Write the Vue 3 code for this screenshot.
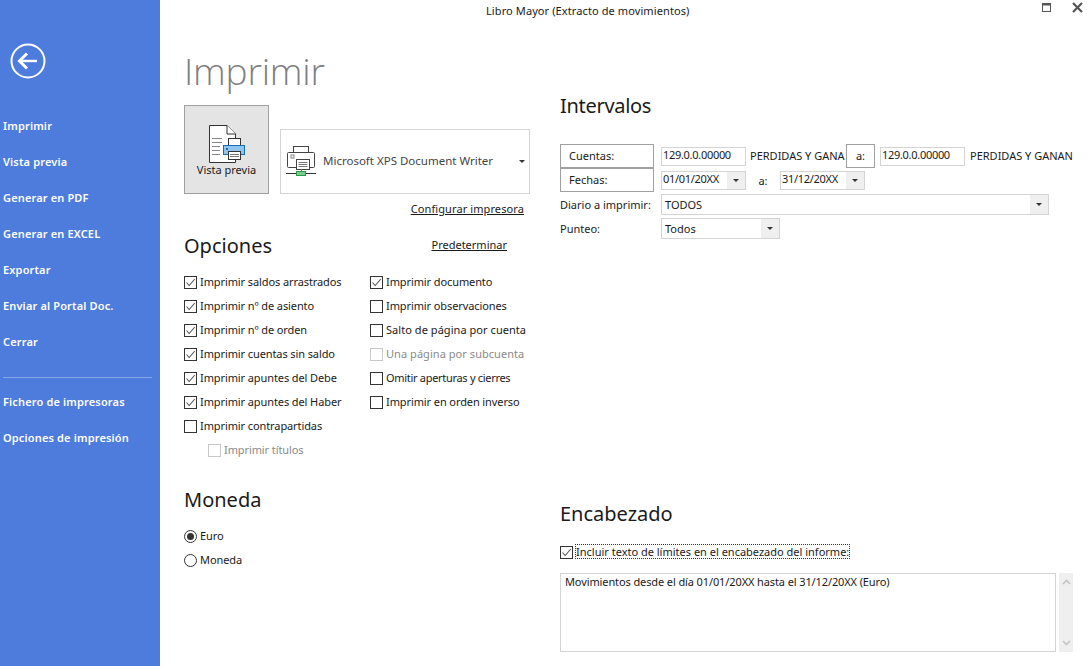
<script setup>
const navTop = ['Imprimir', 'Vista previa', 'Generar en PDF', 'Generar en EXCEL', 'Exportar', 'Enviar al Portal Doc.', 'Cerrar']
const navBottom = ['Fichero de impresoras', 'Opciones de impresión']

const optionsLeft = [
  { label: 'Imprimir saldos arrastrados', on: true },
  { label: 'Imprimir nº de asiento', on: true },
  { label: 'Imprimir nº de orden', on: true },
  { label: 'Imprimir cuentas sin saldo', on: true },
  { label: 'Imprimir apuntes del Debe', on: true },
  { label: 'Imprimir apuntes del Haber', on: true },
  { label: 'Imprimir contrapartidas', on: false },
  { label: 'Imprimir títulos', on: false, off: true, sub: true }
]
const optionsRight = [
  { label: 'Imprimir documento', on: true },
  { label: 'Imprimir observaciones', on: false },
  { label: 'Salto de página por cuenta', on: false, loose: true },
  { label: 'Una página por subcuenta', on: false, off: true, loose: true },
  { label: 'Omitir aperturas y cierres', on: false, tight: true },
  { label: 'Imprimir en orden inverso', on: false }
]
</script>

<template>
  <div class="app">
    <aside class="side">
      <svg class="back" width="36" height="36" viewBox="0 0 36 36">
        <circle cx="18" cy="18" r="16.5" fill="none" stroke="#fff" stroke-width="2" />
        <path d="M9 18H27" stroke="#fff" stroke-width="2.4" fill="none" />
        <path d="M17 10.5L9.5 18L17 25.5" stroke="#fff" stroke-width="3" fill="none" />
      </svg>
      <a v-for="item in navTop" :key="item" class="navItem">{{ item }}</a>
      <div class="navLine"></div>
      <a v-for="item in navBottom" :key="item" class="navItem">{{ item }}</a>
    </aside>

    <main class="main">
      <header class="titleBar">Libro Mayor (Extracto de movimientos)</header>
      <div class="winBtns">
        <svg width="11" height="11" viewBox="0 0 11 11">
          <rect x="1.5" y="1.5" width="8" height="8" fill="none" stroke="#555" stroke-width="1" />
          <rect x="1" y="1" width="9" height="2.5" fill="#555" />
        </svg>
        <svg width="13" height="13" viewBox="0 0 13 13">
          <path d="M2 2L11 11M11 2L2 11" stroke="#555" stroke-width="2.2" fill="none" />
        </svg>
      </div>

      <div class="columns">
        <section class="left">
          <h1 class="pageTitle">Imprimir</h1>

          <div class="printRow">
            <button class="previewBtn">
              <svg width="40" height="40" viewBox="0 0 40 40">
                <path d="M2.5 1.5H20L28.5 10V38.5H2.5Z" fill="#fff" stroke="#333" stroke-width="1" />
                <path d="M20 1.5V10H28.5" fill="#fff" stroke="#333" stroke-width="1" />
                <path d="M5 14.5H15M5 18.5H15M5 22.5H13M5 26.5H13M5 30.5H13" stroke="#888" stroke-width="1" />
                <rect x="21.5" y="14.5" width="12" height="8" fill="#fff" stroke="#333" />
                <rect x="16.5" y="21.5" width="21" height="9" fill="#8fc4f0" stroke="#1a6bb0" />
                <rect x="19" y="24" width="2" height="2" fill="#1a6bb0" />
                <rect x="21.5" y="27.5" width="12" height="8" fill="#fff" stroke="#333" />
                <path d="M23 30.5H32M23 32.5H32" stroke="#777" stroke-width="1" />
              </svg>
              <span class="previewLabel">Vista previa</span>
            </button>

            <div class="printerBox">
              <svg width="32" height="34" viewBox="0 0 32 34">
                <rect x="8.5" y="1.5" width="15" height="6" fill="#fff" stroke="#444" />
                <rect x="2.5" y="7.5" width="27" height="15" rx="1" fill="#fff" stroke="#444" />
                <rect x="6" y="10" width="3" height="3" fill="#fff" stroke="#888" stroke-width="1" />
                <rect x="11.5" y="14.5" width="13" height="10" fill="#fff" stroke="#444" />
                <path d="M13.5 17.5H22.5M13.5 19.5H22.5M13.5 21.5H22.5" stroke="#777" stroke-width="1" />
                <path d="M16.5 24.5V27" stroke="#777" stroke-width="1" />
                <path d="M1 28.5H31" stroke="#333" stroke-width="1" />
                <rect x="11.5" y="26.5" width="9" height="4" fill="#7ecb8f" stroke="#2a9a4a" />
              </svg>
              <span class="printerName">Microsoft XPS Document Writer</span>
              <i class="caret"></i>
            </div>
          </div>

          <div class="configRow"><a class="link">Configurar impresora</a></div>

          <div class="optionsHead">
            <h2 class="heading">Opciones</h2>
            <a class="link defaultLink">Predeterminar</a>
          </div>

          <div class="optionCols">
            <div class="optionCol firstCol">
              <label v-for="o in optionsLeft" :key="o.label" class="check" :class="{ disabled: o.off, sub: o.sub }">
                <span class="box">
                  <svg v-if="o.on" width="11" height="11" viewBox="0 0 11 11">
                    <path d="M1.5 5.5L4.2 8.5L9.8 2" stroke="#555" stroke-width="1.1" fill="none" />
                  </svg>
                </span>
                {{ o.label }}
              </label>
            </div>
            <div class="optionCol">
              <label v-for="o in optionsRight" :key="o.label" class="check" :class="{ disabled: o.off, loose: o.loose, tight: o.tight }">
                <span class="box">
                  <svg v-if="o.on" width="11" height="11" viewBox="0 0 11 11">
                    <path d="M1.5 5.5L4.2 8.5L9.8 2" stroke="#555" stroke-width="1.1" fill="none" />
                  </svg>
                </span>
                {{ o.label }}
              </label>
            </div>
          </div>

          <h2 class="heading monedaHead">Moneda</h2>
          <label class="check"><span class="radio on"></span>Euro</label>
          <label class="check"><span class="radio"></span>Moneda</label>
        </section>

        <section class="right">
          <h2 class="heading intervalHead">Intervalos</h2>

          <div class="row rowTall">
            <button class="fieldBtn">Cuentas:</button>
            <span class="input">129.0.0.00000</span>
            <span class="rangeName shortName">PERDIDAS Y GANA</span>
            <button class="fieldBtn toBtn">a:</button>
            <span class="input">129.0.0.00000</span>
            <span class="rangeName lastName">PERDIDAS Y GANANCIAS</span>
          </div>
          <div class="row rowTall">
            <button class="fieldBtn">Fechas:</button>
            <span class="input">01/01/20XX<i class="drop"><i class="caret"></i></i></span>
            <span class="toLabel">a:</span>
            <span class="input">31/12/20XX<i class="drop"><i class="caret"></i></i></span>
          </div>
          <div class="row rowSelect rowDiario">
            <span class="rowLabel">Diario a imprimir:</span>
            <span class="input select wide">TODOS<i class="drop"><i class="caret"></i></i></span>
          </div>
          <div class="row rowSelect rowPunteo">
            <span class="rowLabel">Punteo:</span>
            <span class="input select narrow">Todos<i class="drop"><i class="caret"></i></i></span>
          </div>

          <h2 class="heading encabezadoHead">Encabezado</h2>
          <label class="check focusCheck">
            <span class="box">
              <svg width="11" height="11" viewBox="0 0 11 11">
                <path d="M1.5 5.5L4.2 8.5L9.8 2" stroke="#555" stroke-width="1.1" fill="none" />
              </svg>
            </span>
            <span class="focusText">Incluir texto de límites en el encabezado del informe:</span>
          </label>

          <div class="textRow">
            <div class="textArea">Movimientos desde el día 01/01/20XX hasta el 31/12/20XX (Euro)</div>
            <div class="scrollBar">
              <svg width="9" height="6" viewBox="0 0 9 6"><path d="M1 5L4.5 1.5L8 5" stroke="#c4c4c4" stroke-width="1.6" fill="none" /></svg>
              <svg width="9" height="6" viewBox="0 0 9 6"><path d="M1 1L4.5 4.5L8 1" stroke="#c4c4c4" stroke-width="1.6" fill="none" /></svg>
            </div>
          </div>
        </section>
      </div>
    </main>
  </div>
</template>

<style>
html, body {
  margin: 0;
  background: #fff;
}
</style>

<style scoped>
.app {
  display: flex;
  width: 1087px;
  height: 666px;
  overflow: hidden;
  background: #fff;
  color: #1a1a1a;
  font-family: "Noto Sans", "Open Sans", sans-serif;
  font-size: 11px;
}

.side {
  width: 160px;
  flex-shrink: 0;
  box-sizing: border-box;
  padding-top: 43px;
  background: #4e7cdc;
  color: #fff;
  display: flex;
  flex-direction: column;
}

.back {
  margin: 0 0 29px 10px;
}

.navItem {
  height: 36px;
  line-height: 36px;
  padding-left: 3px;
  font-weight: 600;
  letter-spacing: 0.15px;
  white-space: nowrap;
}

.navLine {
  height: 1px;
  margin: 17px 8px 6px 3px;
  background: #86a6e8;
}

.main {
  position: relative;
  flex: 1;
  min-width: 0;
}

.titleBar {
  height: 22px;
  line-height: 22px;
  padding-left: 326px;
  letter-spacing: 0.1px;
  white-space: nowrap;
}

.winBtns {
  position: absolute;
  top: 1px;
  right: 3px;
  display: flex;
  align-items: center;
  gap: 19px;
}

.columns {
  display: flex;
  padding-left: 24px;
}

.left {
  width: 346px;
  flex-shrink: 0;
  display: flex;
  flex-direction: column;
}

.right {
  width: 513px;
  margin-left: 30px;
  overflow: hidden;
}

.pageTitle {
  height: 45px;
  margin: 26px 0 12px;
  color: #7f7f7f;
  font-family: "Open Sans", "Noto Sans", sans-serif;
  font-size: 37px;
  font-weight: 300;
  letter-spacing: -0.2px;
  line-height: 45px;
}

.printRow {
  display: flex;
  align-items: flex-end;
  gap: 11px;
}

.previewBtn {
  width: 85px;
  height: 89px;
  box-sizing: border-box;
  padding: 18px 0 0;
  border: 1px solid #a0a0a0;
  background: #e4e4e4;
  color: inherit;
  font: inherit;
  display: flex;
  flex-direction: column;
  align-items: center;
}

.previewLabel {
  margin-top: -2px;
}

.printerBox {
  width: 250px;
  height: 65px;
  box-sizing: border-box;
  padding: 0 3px 0 4px;
  border: 1px solid #d4d4d4;
  display: flex;
  align-items: center;
  gap: 6px;
}

.printerName {
  flex: 1;
  padding-bottom: 2px;
  color: #444;
  font-size: 11.5px;
}

.caret {
  display: block;
  width: 0;
  height: 0;
  border-left: 3px solid transparent;
  border-right: 3px solid transparent;
  border-top: 3px solid #333;
}

.printerBox .caret {
  margin-right: 1px;
}

.configRow {
  margin-top: 7px;
  padding-right: 6px;
  text-align: right;
  letter-spacing: 0.1px;
  line-height: 16px;
}

.link {
  text-decoration: underline;
}

.heading {
  margin: 0;
  font-size: 20px;
  font-weight: 400;
  line-height: 30px;
}

.optionsHead {
  margin-top: 14px;
  padding-right: 23px;
  display: flex;
  align-items: center;
  justify-content: space-between;
}

.defaultLink {
  margin-bottom: 3px;
}

.optionCols {
  display: flex;
  margin-top: 9px;
}

.optionCol {
  display: flex;
  flex-direction: column;
}

.firstCol {
  width: 186px;
}

.check {
  height: 24px;
  box-sizing: border-box;
  padding-bottom: 2px;
  display: flex;
  align-items: center;
  gap: 3px;
  letter-spacing: -0.1px;
  white-space: nowrap;
}

.check.loose {
  letter-spacing: 0.05px;
}

.check.tight {
  letter-spacing: -0.3px;
}

.check.sub {
  padding-left: 24px;
}

.check.disabled {
  color: #8a8a8a;
}

.box,
.radio {
  width: 13px;
  height: 13px;
  box-sizing: border-box;
  margin-top: 2px;
  border: 1px solid #333;
  background: #fff;
  flex-shrink: 0;
}

.box {
  display: flex;
  align-items: center;
  justify-content: center;
}

.disabled .box {
  border-color: #c8c8c8;
}

.radio {
  position: relative;
  border-radius: 50%;
}

.radio.on::after {
  content: "";
  position: absolute;
  inset: 2px;
  border-radius: 50%;
  background: #333;
}

.monedaHead {
  margin: 23px 0 9px;
}

.intervalHead {
  margin: 69px 0 23px;
  letter-spacing: -0.3px;
}

.row {
  display: flex;
  align-items: center;
  white-space: nowrap;
}

.row > * {
  flex-shrink: 0;
}

.rowTall {
  height: 24px;
}

.rowSelect {
  height: 21px;
}

.rowDiario {
  margin-top: 2px;
}

.rowPunteo {
  margin-top: 3px;
}

.fieldBtn {
  width: 94px;
  height: 24px;
  box-sizing: border-box;
  margin-right: 7px;
  padding: 0 0 1px 8px;
  border: 1px solid #a0a0a0;
  background: #fff;
  color: inherit;
  font: inherit;
  text-align: left;
}

.toBtn {
  width: 29px;
  margin-right: 5px;
  padding: 0 0 1px;
  text-align: center;
}

.input {
  position: relative;
  width: 85px;
  height: 19px;
  box-sizing: border-box;
  padding-left: 1px;
  border: 1px solid #d4d4d4;
  background: #fff;
  letter-spacing: -0.3px;
  line-height: 14px;
  display: block;
}

.rangeName {
  margin-left: 4px;
  padding-bottom: 2px;
}

.lastName {
  margin-left: 5px;
}

.shortName {
  width: 96px;
  overflow: hidden;
}

.toLabel {
  width: 34px;
  text-align: center;
}

.drop {
  position: absolute;
  top: 0;
  right: 0;
  bottom: 0;
  width: 18px;
  background: #efefef;
  display: flex;
  align-items: center;
  justify-content: center;
}

.rowLabel {
  width: 101px;
}

.select {
  height: 21px;
  padding-left: 3px;
  letter-spacing: 0;
  line-height: 19px;
}

.wide {
  width: 388px;
}

.narrow {
  width: 119px;
}

.encabezadoHead {
  margin: 260px 0 15px;
}

.focusCheck {
  height: 16px;
  padding-bottom: 1px;
}

.focusCheck .box {
  margin-top: 1px;
}

.focusText {
  outline: 1px dotted #333;
  letter-spacing: 0;
  line-height: 13px;
}

.textRow {
  display: flex;
  margin-top: 13px;
  gap: 3px;
}

.textArea {
  width: 496px;
  height: 79px;
  box-sizing: border-box;
  padding: 0 4px;
  border: 1px solid #d4d4d4;
  letter-spacing: -0.11px;
}

.scrollBar {
  width: 14px;
  height: 79px;
  box-sizing: border-box;
  padding: 6px 0;
  background: #efefef;
  display: flex;
  flex-direction: column;
  align-items: center;
  justify-content: space-between;
}
</style>
